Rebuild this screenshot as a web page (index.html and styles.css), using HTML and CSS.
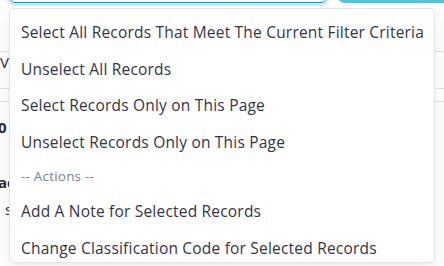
FILE: index.html
```html
<!DOCTYPE html>
<html lang="en">
<head>
    <meta charset="UTF-8">
    <title>Bulk Select</title>
    <link rel="stylesheet" href="styles.css">
</head>
<body>
    <div class="page">
        <!-- Toolbar (mostly scrolled out of view) -->
        <div class="toolbar">
            <div class="search-box"></div>
            <button class="search-btn"></button>
        </div>

        <!-- Records table behind the menu -->
        <div class="records">
            <div class="row row-top"></div>
            <div class="row row-view">V</div>
            <div class="row row-spacer"></div>
            <div class="row row-count">0</div>
            <div class="row row-action">ac</div>
            <div class="row row-sub">s</div>
        </div>

        <!-- Bulk select menu -->
        <ul class="select-menu">
            <li class="menu-item">Select All Records That Meet The Current Filter Criteria</li>
            <li class="menu-item">Unselect All Records</li>
            <li class="menu-item">Select Records Only on This Page</li>
            <li class="menu-item">Unselect Records Only on This Page</li>
            <li class="menu-header">-- Actions --</li>
            <li class="menu-item">Add A Note for Selected Records</li>
            <li class="menu-item">Change Classification Code for Selected Records</li>
        </ul>
    </div>
</body>
</html>
```

FILE: styles.css
```css
:root {
    --teal: #1b9ab3;
    --teal-light: #5bc1d4;
    --text-main: #343447;
    --text-muted: #7b8095;
    --border: #e3e5ea;
    --line: #dfe1e6;
}

body {
    margin: 0;
    background: #fff;
    font-family: "Open Sans", Lato, sans-serif;
    overflow: hidden;
}

.page {
    position: relative;
    width: 444px;
    height: 266px;
    overflow: hidden;
}

.toolbar {
    display: flex;
    gap: 10px;
    height: 36px;
    margin-top: -33px;
    padding-left: 9px;
}

.search-box {
    width: 316px;
    border: 1px solid var(--teal);
    border-radius: 6px;
    box-shadow: 0 0 0 3px #d3edf3;
}

.search-btn {
    flex: 1;
    border: none;
    border-radius: 8px 0 0 8px;
    background: var(--teal-light);
}

.records {
    display: flex;
    flex-direction: column;
    font-size: 15px;
    line-height: 20px;
    color: #2a2a35;
}

.row-top {
    height: 48px;
    border-bottom: 1px solid var(--line);
}

.row-view {
    height: 36px;
    border-bottom: 1px solid var(--line);
}

.row-spacer {
    height: 12px;
    border-bottom: 1px solid var(--line);
}

.row-count {
    height: 20px;
    margin-top: 15px;
    margin-left: -2px;
    font-weight: 700;
}

.row-action {
    height: 20px;
    margin-top: 35px;
    margin-left: -2px;
    font-weight: 700;
}

.row-sub {
    height: 20px;
    margin-top: 7px;
    padding-left: 5px;
}

.select-menu {
    position: absolute;
    top: 8px;
    left: 9px;
    width: 424px;
    height: 248px;
    margin: 0;
    padding: 5px 0 0;
    list-style: none;
    background: #fff;
    border: 1px solid var(--border);
    border-radius: 5px;
    box-shadow: 0 6px 16px rgba(0, 0, 0, 0.08);
    overflow: hidden;
}

.menu-item,
.menu-header {
    height: 36.5px;
    line-height: 36px;
    padding: 0 11px;
    white-space: nowrap;
    font-size: 15.5px;
    letter-spacing: 0.2px;
    color: var(--text-main);
}

.menu-header {
    height: 33px;
    line-height: 33px;
    font-size: 13.5px;
    color: var(--text-muted);
}
```
